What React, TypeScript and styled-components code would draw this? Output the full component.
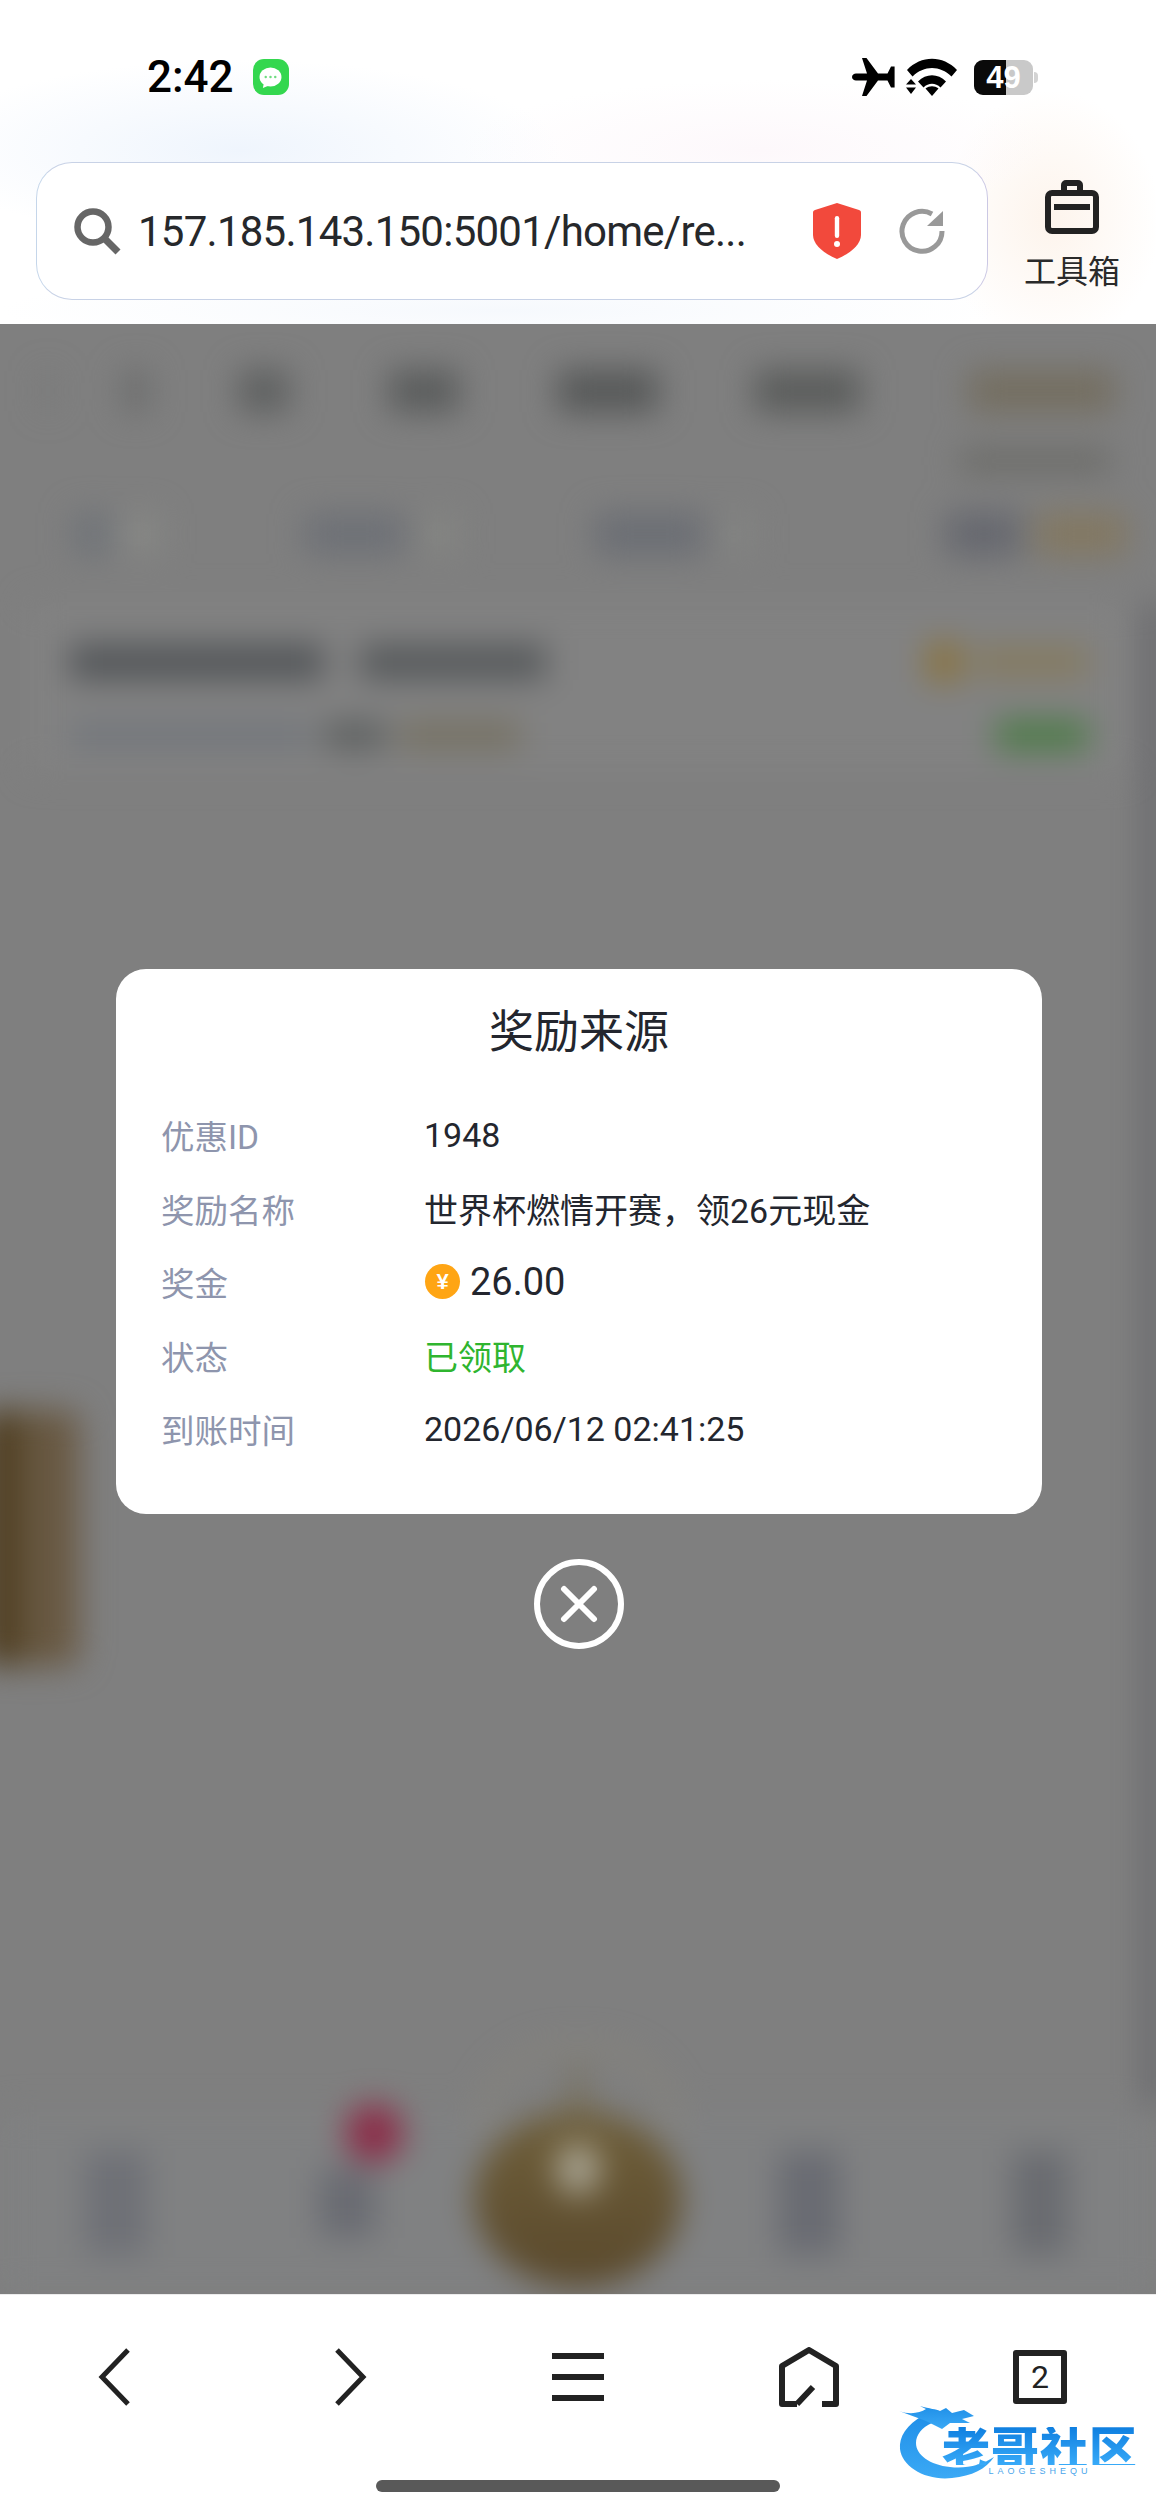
import styled, { createGlobalStyle } from 'styled-components';

const GlobalStyle = createGlobalStyle`
  * { box-sizing: border-box; }
  html, body { margin: 0; padding: 0; background: #fff; }
  body { font-family: Roboto, 'Noto Sans CJK SC', sans-serif; }
`;

const rows = [
  { label: '优惠ID', value: '1948' },
  { label: '奖励名称', value: '世界杯燃情开赛，领26元现金' },
  { label: '奖金', value: '26.00', coin: true },
  { label: '状态', value: '已领取', green: true },
  { label: '到账时间', value: '2026/06/12 02:41:25' },
];

function App() {
  return (
    <>
      <GlobalStyle />
      <Screen>
        <Header>
          <StatusBar>
            <StatusLeft>
              <Clock>2:42</Clock>
              <MessageBadge>
                <svg width="23" height="21" viewBox="0 0 24 22">
                  <ellipse cx="12" cy="10.5" rx="11.5" ry="10" fill="#fff" />
                  <path d="M5 17l-1 5 7-3z" fill="#fff" />
                  <circle cx="7" cy="10.5" r="1.3" fill="#6fdc80" />
                  <circle cx="12" cy="10.5" r="1.3" fill="#6fdc80" />
                  <circle cx="17" cy="10.5" r="1.3" fill="#6fdc80" />
                </svg>
              </MessageBadge>
            </StatusLeft>
            <StatusRight>
              <svg width="44" height="40" viewBox="0 0 44 40">
                <path
                  fill="#000"
                  d="M1 20c0-2 2-3.400 4-3.400h11L11 1h4.500l11.500 15.600h9.500L40 9.500h3.600V30.500H40l-3.500-7H27L15.500 39H11l5-15.500H5c-2 0-4-1.500-4-3.500z"
                />
              </svg>
              <svg width="52" height="38" viewBox="0 0 52 38">
                <path d="M1 12C15-3 37-3 51 12l-5.500 6.500C34 7 18 7 6.500 18.500z" fill="#000" />
                <path d="M12 23.500c8-8.500 20-8.500 28 0l-5.500 6c-5-5-12-5-17 0z" fill="#000" />
                <path d="M19.500 30.500c4-3 9-3 13 0L26 38z" fill="#000" />
                <path d="M5 21l5 5.500H0zM0 29.500h10L5 36z" fill="#000" />
              </svg>
              <Battery>
                <BatteryFill />
                <BatteryText>49</BatteryText>
                <BatteryNub />
              </Battery>
            </StatusRight>
          </StatusBar>
          <AddressRow>
            <AddressBar>
              <svg width="48" height="48" viewBox="0 0 48 48">
                <circle cx="20" cy="20" r="15.500" fill="none" stroke="#666" strokeWidth="6.500" />
                <path d="M31 31l14 14" stroke="#666" strokeWidth="7" />
              </svg>
              <UrlText>157.185.143.150:5001/home/re...</UrlText>
              <svg width="48" height="56" viewBox="0 0 48 56">
                <path
                  d="M24 0l22 7c1.500.5 2 1 2 3v22c0 10-12 19-24 24C12 51 0 42 0 32V10c0-2 .5-2.500 2-3z"
                  fill="#f2493c"
                />
                <rect x="21.800" y="13" width="4.400" height="22" rx="2.200" fill="#fff" />
                <circle cx="24" cy="41" r="3" fill="#fff" />
              </svg>
              <svg width="46" height="46" viewBox="0 0 46 46">
                <path d="M33 6A20 20 0 1 0 43 23" fill="none" stroke="#999" strokeWidth="5" />
                <path d="M44 3v15H28z" fill="#999" />
              </svg>
            </AddressBar>
            <ToolButton>
              <svg width="54" height="54" viewBox="0 0 54 54">
                <path d="M19 13V5a2 2 0 0 1 2-2h12a2 2 0 0 1 2 2v8" fill="none" stroke="#222" strokeWidth="6" />
                <rect x="3" y="13" width="48" height="38" rx="4" fill="none" stroke="#222" strokeWidth="6" />
                <rect x="9" y="24" width="36" height="6" fill="#222" />
              </svg>
              <ToolLabel>工具箱</ToolLabel>
            </ToolButton>
          </AddressRow>
        </Header>

        <PageArea>
          <BlurredPage>
            <BlurNav>
              <Smudge $w={14} $h={40} $c="#72737380" />
              <Smudge $w={26} $h={42} $c="#6c6d6d" $ml={68} />
              <Smudge $w={50} $h={42} $c="#5e6060" $ml={90} />
              <Smudge $w={70} $h={42} $c="#5a5c5c" $ml={100} />
              <Smudge $w={100} $h={42} $c="#565858" $ml={99} />
              <Smudge $w={105} $h={42} $c="#5a5c5b" $ml={97} />
              <NavEnd>
                <Smudge $w={145} $h={42} $c="#746e60" />
              </NavEnd>
            </BlurNav>
            <BlurSub>
              <Smudge $w={150} $h={22} $c="#6a6a66" />
            </BlurSub>
            <BlurFilters>
              <Smudge $w={36} $h={42} $c="#6f7378" />
              <Smudge $w={34} $h={40} $c="#888986" $ml={14} />
              <Smudge $w={100} $h={40} $c="#6d7076" $ml={147} />
              <Smudge $w={34} $h={40} $c="#858683" $ml={18} />
              <Smudge $w={110} $h={42} $c="#6b6e74" $ml={138} />
              <Smudge $w={30} $h={40} $c="#848583" $ml={16} />
              <NavEnd>
                <Smudge $w={76} $h={44} $c="#66686f" />
                <Smudge $w={90} $h={42} $c="#837861" />
              </NavEnd>
            </BlurFilters>
            <BlurCard>
              <CardLine>
                <Smudge $w={254} $h={36} $c="#535659" />
                <Smudge $w={186} $h={36} $c="#575a5c" $ml={36} />
                <NavEnd>
                  <Smudge $w={36} $h={40} $c="#8a7440" />
                  <Smudge $w={112} $h={32} $c="#857b60" />
                </NavEnd>
              </CardLine>
              <CardLine>
                <Smudge $w={240} $h={26} $c="#72767c" />
                <Smudge $w={62} $h={28} $c="#5d6060" $ml={14} />
                <Smudge $w={120} $h={28} $c="#767162" $ml={14} />
                <NavEnd>
                  <Smudge $w={92} $h={30} $c="#4c7c47" />
                </NavEnd>
              </CardLine>
            </BlurCard>
            <BlurTabBar>
              <BlurTab>
                <Smudge $w={62} $h={104} $c="#6e7076" />
              </BlurTab>
              <BlurTab>
                <RedDot />
                <Smudge $w={56} $h={70} $c="#696b72" />
              </BlurTab>
              <BlurTab>
                <Antenna />
                <AntennaStem />
                <GoldButton>
                  <GoldSpot />
                </GoldButton>
              </BlurTab>
              <BlurTab>
                <Smudge $w={62} $h={104} $c="#696b72" />
              </BlurTab>
              <BlurTab>
                <Smudge $w={56} $h={104} $c="#696b70" />
              </BlurTab>
            </BlurTabBar>
            <SideDrawer />
            <ScrollEdge />
          </BlurredPage>

          <Overlay>
            <Modal>
              <ModalTitle>奖励来源</ModalTitle>
              <InfoList>
                {rows.map((r) => (
                  <InfoRow key={r.label}>
                    <InfoLabel>{r.label}</InfoLabel>
                    <InfoValue $green={r.green} $big={r.coin}>
                      {r.coin && <Coin>¥</Coin>}
                      {r.value}
                    </InfoValue>
                  </InfoRow>
                ))}
              </InfoList>
            </Modal>
            <CloseButton aria-label="关闭">
              <svg width="38" height="38" viewBox="0 0 38 38">
                <path d="M4 4l30 30M34 4L4 34" stroke="#fff" strokeWidth="6" strokeLinecap="round" />
              </svg>
            </CloseButton>
          </Overlay>
        </PageArea>

        <BottomBar>
          <ToolIcons>
            <ToolIcon>
              <svg width="34" height="58" viewBox="0 0 34 58">
                <path d="M31 2L5 29l26 27" fill="none" stroke="#222" strokeWidth="5" />
              </svg>
            </ToolIcon>
            <ToolIcon>
              <svg width="34" height="58" viewBox="0 0 34 58">
                <path d="M3 2l26 27L3 56" fill="none" stroke="#222" strokeWidth="5" />
              </svg>
            </ToolIcon>
            <ToolIcon>
              <svg width="52" height="48" viewBox="0 0 52 48">
                <path d="M0 3h52M0 24h52M0 45h52" stroke="#222" strokeWidth="6" />
              </svg>
            </ToolIcon>
            <ToolIcon>
              <svg width="60" height="60" viewBox="0 0 60 60">
                <path
                  d="M18 57H3V19L30 3l27 16v38H43M18 57l16-17"
                  fill="none"
                  stroke="#222"
                  strokeWidth="6"
                  strokeLinejoin="round"
                />
              </svg>
            </ToolIcon>
            <ToolIcon>
              <TabCount>2</TabCount>
            </ToolIcon>
          </ToolIcons>
          <HomeIndicator />
          <Watermark>
            <svg width="110" height="90" viewBox="0 0 110 90">
              <defs>
                <linearGradient id="dragon" x1="0" y1="0" x2="0" y2="1">
                  <stop offset="0" stopColor="#1f8fe8" />
                  <stop offset="1" stopColor="#3ba9f5" />
                </linearGradient>
              </defs>
              <path
                fill="url(#dragon)"
                d="M34 20C16 30 9 42 10 54c2 18 26 32 52 29 20-2 34-9 42-21-12 8-28 12-44 10-20-2-34-12-34-24 0-8 6-16 16-20z"
              />
              <path
                fill="url(#dragon)"
                d="M9 16c11 4 21 2 27-2l-6-3c10 3 16 3 20 5l6-3 6 5 12-3 10 6-12 3 8 4H60l-8 6-8-4-8-4z"
              />
            </svg>
            <WatermarkText>
              <WatermarkTitle>老哥社区</WatermarkTitle>
              <WatermarkSub>LAOGESHEQU</WatermarkSub>
            </WatermarkText>
          </Watermark>
        </BottomBar>
      </Screen>
    </>
  );
}

const Screen = styled.div`
  width: 1156px;
  height: 2510px;
  display: flex;
  flex-direction: column;
  overflow: hidden;
  background: #fff;
`;

const Header = styled.header`
  height: 324px;
  flex: none;
  padding: 58px 0 0 36px;
  background:
    radial-gradient(ellipse 320px 90px at 240px 150px, #eff5fd 0%, #ffffff00 100%),
    radial-gradient(ellipse 300px 70px at 760px 150px, #fdf8fb 0%, #ffffff00 100%),
    radial-gradient(ellipse 110px 130px at 1050px 220px, #fdf4ec 0%, #ffffff00 100%),
    radial-gradient(ellipse 500px 40px at 500px 310px, #f6f9fd 0%, #ffffff00 100%),
    #fff;
`;

const StatusBar = styled.div`
  height: 38px;
  display: flex;
  justify-content: space-between;
  align-items: center;
  padding: 0 123px 0 111px;
`;

const StatusLeft = styled.div`
  display: flex;
  align-items: center;
  gap: 19px;
`;

const Clock = styled.span`
  font: 500 44px/38px Roboto, sans-serif;
  color: #000;
`;

const MessageBadge = styled.span`
  width: 36px;
  height: 36px;
  border-radius: 11px;
  background: #34d74f;
  display: grid;
  place-items: center;
`;

const StatusRight = styled.div`
  display: flex;
  align-items: center;
  gap: 11px;
`;

const Battery = styled.div`
  position: relative;
  width: 59px;
  height: 35px;
  margin-left: 5px;
  border-radius: 9px;
  background: #c9c9c9;
  display: grid;
  place-items: center;
`;

const BatteryFill = styled.span`
  position: absolute;
  inset: 0 auto 0 0;
  width: 32px;
  border-radius: 9px 0 0 9px;
  background: #0a0a0a;
`;

const BatteryText = styled.span`
  position: relative;
  color: #fff;
  font: 700 31px/35px 'Liberation Sans', sans-serif;
`;

const BatteryNub = styled.span`
  position: absolute;
  right: -5px;
  top: 12px;
  width: 4px;
  height: 11px;
  border-radius: 0 4px 4px 0;
  background: #d3d3d3;
`;

const AddressRow = styled.div`
  display: flex;
  align-items: flex-start;
  margin-top: 66px;
`;

const AddressBar = styled.div`
  width: 952px;
  height: 138px;
  flex: none;
  display: flex;
  align-items: center;
  padding: 0 42px 0 36px;
  border: 1.500px solid;
  border-color: #c8d2e6 #cbc8e4 #c8d2e6 #c5d6ea;
  border-radius: 36px;
  background: #fff;

  svg:nth-of-type(2) {
    margin-left: auto;
  }

  svg:nth-of-type(3) {
    margin-left: 38px;
  }
`;

const UrlText = styled.span`
  margin-left: 17px;
  font-size: 42px;
  letter-spacing: -0.75px;
  color: #26282b;
  white-space: nowrap;
`;

const ToolButton = styled.div`
  flex: 1;
  display: flex;
  flex-direction: column;
  align-items: center;
  padding-top: 18px;
`;

const ToolLabel = styled.span`
  margin-top: 18px;
  font-size: 32px;
  line-height: 40px;
  color: #2a2a2a;
`;

const PageArea = styled.main`
  position: relative;
  flex: 1;
  overflow: hidden;
  background: #7f7f7f;
`;

const BlurredPage = styled.div`
  height: 100%;
  display: flex;
  flex-direction: column;
  filter: blur(16px);
`;

const Smudge = styled.span<{ $w: number; $h: number; $c: string; $ml?: number }>`
  flex: none;
  width: ${(p) => p.$w}px;
  height: ${(p) => p.$h}px;
  margin-left: ${(p) => p.$ml ?? 0}px;
  background: ${(p) => p.$c};
`;

const BlurNav = styled.div`
  display: flex;
  align-items: center;
  padding: 46px 42px 0 41px;
`;

const NavEnd = styled.div`
  margin-left: auto;
  display: flex;
  align-items: center;
  gap: 14px;
`;

const BlurSub = styled.div`
  display: flex;
  justify-content: flex-end;
  padding: 38px 46px 0 0;
`;

const BlurFilters = styled.div`
  display: flex;
  align-items: center;
  padding: 40px 30px 0 74px;
`;

const BlurCard = styled.section`
  margin: 46px 30px 0 30px;
  padding: 40px 38px 0 40px;
  height: 170px;
  background: #828282;
`;

const CardLine = styled.div`
  display: flex;
  align-items: center;
  margin-bottom: 38px;
`;

const BlurTabBar = styled.nav`
  margin-top: auto;
  height: 182px;
  display: grid;
  grid-template-columns: repeat(5, 1fr);
  background: #808182;
`;

const BlurTab = styled.div`
  position: relative;
  display: flex;
  justify-content: center;
  align-items: center;
`;

const RedDot = styled.span`
  position: absolute;
  left: 114px;
  top: -8px;
  width: 58px;
  height: 58px;
  border-radius: 50%;
  background: #8c2c48;
`;

const Antenna = styled.span`
  position: absolute;
  left: 14px;
  top: -68px;
  width: 204px;
  height: 90px;
  border: 8px solid #8b877b;
  border-bottom: 0;
  border-radius: 110px 110px 0 0;
`;

const AntennaStem = styled.span`
  position: absolute;
  left: 108px;
  top: -44px;
  width: 16px;
  height: 50px;
  background: #77705c;
`;

const GoldButton = styled.span`
  position: relative;
  width: 208px;
  height: 176px;
  border-radius: 50%;
  background: linear-gradient(#6f5f3a, #5a492c);
  transform: translateY(-4px);
`;

const GoldSpot = styled.span`
  position: absolute;
  left: 82px;
  top: 32px;
  width: 44px;
  height: 52px;
  border-radius: 50%;
  background: #a9a594;
`;

const SideDrawer = styled.aside`
  position: absolute;
  left: -16px;
  top: 1086px;
  width: 96px;
  height: 256px;
  border-radius: 14px;
  background: linear-gradient(90deg, #4a3718 0 20%, #63543c 40%, #6d5d48 100%);
`;

const ScrollEdge = styled.span`
  position: absolute;
  right: -3px;
  top: 280px;
  width: 10px;
  height: 1500px;
  background: #4f5058;
`;

const Overlay = styled.div`
  position: absolute;
  inset: 0;
  padding-left: 2px;
  display: flex;
  flex-direction: column;
  align-items: center;
  justify-content: center;
  gap: 45px;
`;

const Modal = styled.div`
  width: 926px;
  height: 545px;
  padding: 32px 45px 0;
  border-radius: 30px;
  background: #fff;
`;

const ModalTitle = styled.h2`
  margin: 0;
  font-size: 45px;
  line-height: 64px;
  font-weight: 400;
  text-align: center;
  color: #23262e;
`;

const InfoList = styled.dl`
  margin: 33px 0 0;
`;

const InfoRow = styled.div`
  display: grid;
  grid-template-columns: 263px 1fr;
  height: 73.5px;
  align-items: center;
`;

const InfoLabel = styled.dt`
  font-size: 33.5px;
  color: #8e95ad;
`;

const InfoValue = styled.dd<{ $green?: boolean; $big?: boolean }>`
  margin: 0;
  display: flex;
  align-items: center;
  gap: 10px;
  font-size: ${(p) => (p.$big ? 38 : 34)}px;
  color: ${(p) => (p.$green ? '#2fb52f' : '#23262e')};
`;

const Coin = styled.span`
  width: 35px;
  height: 35px;
  margin-left: 1px;
  border-radius: 50%;
  background: #ffa514;
  color: #fff;
  display: grid;
  place-items: center;
  font: 700 22px/35px 'Liberation Sans', sans-serif;
`;

const CloseButton = styled.button`
  width: 90px;
  height: 90px;
  padding: 0;
  flex: none;
  border: 6px solid #fff;
  border-radius: 50%;
  background: transparent;
  display: grid;
  place-items: center;
`;

const BottomBar = styled.footer`
  position: relative;
  height: 216px;
  flex: none;
  padding-top: 52px;
  background: #fff;
  border-top: 1px solid #ececec;
`;

const ToolIcons = styled.div`
  height: 60px;
  display: grid;
  grid-template-columns: 227px 247px 208px 254px 208px;
`;

const ToolIcon = styled.div`
  display: grid;
  place-items: center;
`;

const TabCount = styled.span`
  width: 54px;
  height: 54px;
  border: 6px solid #222;
  border-radius: 3px;
  display: grid;
  place-items: center;
  font-size: 32px;
  line-height: 1;
  color: #222;
`;

const HomeIndicator = styled.div`
  width: 404px;
  height: 12px;
  margin: 73px auto 0;
  border-radius: 6px;
  background: #595959;
`;

const Watermark = styled.div`
  position: absolute;
  left: 890px;
  top: 100px;
  width: 266px;
  height: 100px;
`;

const WatermarkText = styled.div`
  position: absolute;
  left: 52px;
  top: 32px;
  display: flex;
  flex-direction: column;
  align-items: center;
`;

const WatermarkTitle = styled.span`
  font: 900 48px/38px 'Noto Sans CJK SC', sans-serif;
  letter-spacing: 1px;
  background: linear-gradient(#0f7fe0, #38aaf8);
  -webkit-background-clip: text;
  background-clip: text;
  color: transparent;
  white-space: nowrap;
`;

const WatermarkSub = styled.span`
  margin-top: 1px;
  font: 400 9px/10px 'Liberation Sans', sans-serif;
  letter-spacing: 4px;
  color: #4aa6ea;
`;

export default App;
